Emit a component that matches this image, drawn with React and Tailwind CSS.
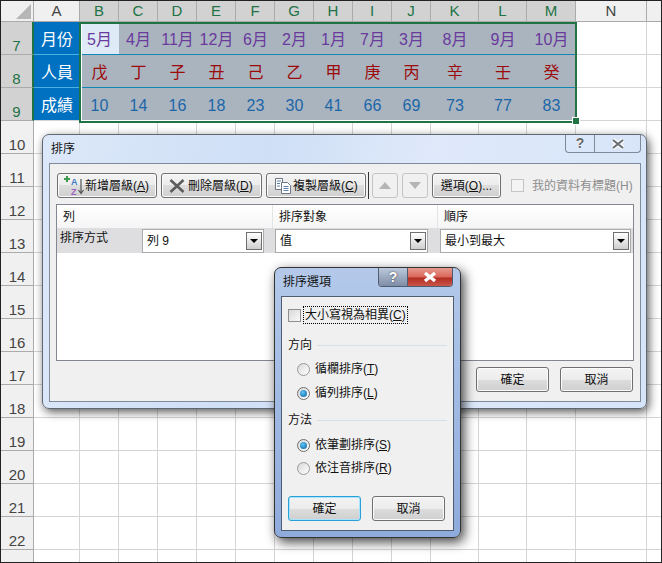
import React from "react";

const FONT = { fontFamily: '"Liberation Sans","Noto Sans CJK TC",sans-serif' };

const columns = ["A", "B", "C", "D", "E", "F", "G", "H", "I", "J", "K", "L", "M", "N", ""];
const months = ["5月", "4月", "11月", "12月", "6月", "2月", "1月", "7月", "3月", "8月", "9月", "10月"];
const people = ["戊", "丁", "子", "丑", "己", "乙", "甲", "庚", "丙", "辛", "壬", "癸"];
const scores = ["10", "14", "16", "18", "23", "30", "41", "66", "69", "73", "77", "83"];
const emptyRows = [10, 11, 12, 13, 14, 15, 16, 17, 18, 19, 20, 21, 22];

function Hot({ children }) {
  return <span className="underline underline-offset-1">{children}</span>;
}

function Button({ children, focused, className = "" }) {
  const edge = focused
    ? "border-[#2b9fd8] shadow-[inset_0_0_0_1px_#a8e4fb]"
    : "border-[#707070] shadow-[inset_0_0_0_1px_#fbfbfb]";
  return (
    <button className={"h-[25px] shrink-0 flex items-center rounded-[3px] border bg-[linear-gradient(#f3f3f3_0%,#ececec_50%,#dddddd_50%,#cfcfcf_100%)] text-[12px] leading-[18px] text-[#111] " + edge + " " + className}>
      {children}
    </button>
  );
}

function Combo({ text, className = "" }) {
  return (
    <div className={"h-[24px] shrink-0 flex items-center justify-between border border-[#ababab] bg-white pl-1 pr-[1px] text-[12px] text-[#111] " + className}>
      <span>{text}</span>
      <span className="w-[16px] h-[18px] flex items-center justify-center border border-[#6f6f6f] bg-[linear-gradient(#ffffff,#cfcfcf)]">
        <span className="w-0 h-0 border-x-[4px] border-x-transparent border-t-[4px] border-t-black"></span>
      </span>
    </div>
  );
}

function Radio({ checked, children }) {
  return (
    <div className="flex items-center gap-[5px] h-[14px] text-[12px] leading-[18px] text-[#111]">
      <span className={"w-[13px] h-[13px] rounded-full border bg-[linear-gradient(135deg,#d8d8d8,#ffffff)] flex items-center justify-center " + (checked ? "border-[#6f6f6f]" : "border-[#9a9a9a]")}>
        {checked && <span className="w-[7px] h-[7px] rounded-full bg-[radial-gradient(circle_at_40%_35%,#5fc4f5,#0a5f9e)]"></span>}
      </span>
      <span>{children}</span>
    </div>
  );
}

function Section({ title }) {
  return (
    <div className="h-[18px] flex items-center gap-[5px] text-[12px] leading-[18px] text-[#111]">
      <span>{title}</span>
      <span className="h-px flex-1 bg-[#d5dfe5]"></span>
    </div>
  );
}

function AddIcon() {
  return (
    <svg width="22" height="22" viewBox="0 0 22 22">
      <path d="M1 4h6M4 1v6" stroke="#3f9a4e" strokeWidth="2" />
      <text x="8" y="10" fontSize="9" fontWeight="700" fill="#3f78c4" fontFamily="Liberation Sans">A</text>
      <text x="8" y="20" fontSize="9" fontWeight="700" fill="#9a5fc0" fontFamily="Liberation Sans">Z</text>
      <path d="M18 4v14M15.5 15l2.5 3.5 2.5-3.5" stroke="#555" strokeWidth="1.2" fill="none" />
    </svg>
  );
}

function DeleteIcon() {
  return (
    <svg width="16" height="16" viewBox="0 0 16 16">
      <path d="M1.5 2l13 12M14.5 2l-13 12" stroke="#5c5c5c" strokeWidth="2.6" />
    </svg>
  );
}

function CopyIcon() {
  return (
    <svg width="18" height="18" viewBox="0 0 18 18">
      <path d="M1.5 1.5h7v11h-7z" fill="#fff" stroke="#6b7785" />
      <path d="M7.5 5.5h6l3 3v8h-9z" fill="#fff" stroke="#6b7785" />
      <path d="M3 4h4M3 6.5h3M3 9h3M9.5 9.5h5M9.5 11.5h5M9.5 13.5h5" stroke="#5c7fa8" />
    </svg>
  );
}

function ArrowButton({ up }) {
  return (
    <div className="w-[26px] h-[25px] shrink-0 flex items-center justify-center rounded-[3px] border border-[#c4c4c4] bg-[#f0f0f0]">
      <span className={"w-0 h-0 border-x-[6px] border-x-transparent " + (up ? "border-b-[7px] border-b-[#b4b4b4]" : "border-t-[7px] border-t-[#b4b4b4]")}></span>
    </div>
  );
}

function Sheet() {
  return (
    <div className="grid grid-cols-[33px_46px_repeat(9,39px)_48px_48px_49px_71px_15px] grid-rows-[21px_repeat(16,33px)_12px] bg-white">
      {/* column headers */}
      <div className="bg-[#f0f0f0] border-r border-b border-[#ababab] flex items-end justify-end pr-[2px] pb-[2px]">
        <svg width="15" height="15" viewBox="0 0 15 15"><path d="M15 0v15H0z" fill="#b6b6b6" /></svg>
      </div>
      {columns.map((c, i) => (
        <div key={i} className={"flex items-center justify-center border-r border-b border-[#ababab] text-[15px] " + (i >= 1 && i <= 12 ? "bg-[#d2d2d2] text-[#217346]" : "bg-[#f0f0f0] text-[#444]")}>
          {c}
        </div>
      ))}

      {/* row 7 */}
      <div className="bg-[#d2d2d2] border-r-2 border-b border-r-[#217346] border-b-[#ababab] flex items-end justify-center text-[15px] leading-[17px] text-[#217346]">7</div>
      <div className="bg-[#0070c0] border-b border-[#4cb0e0] flex items-center justify-center pt-[3px] text-[16px] text-white">月份</div>
      {months.map((m, i) => (
        <div key={i} className={"flex items-center justify-center border-b border-[#1186b5] pt-[3px] text-[16px] text-[#6a3a9c] " + (i === 0 ? "bg-[#deebf7]" : "bg-[#a9b4bf]")}>{m}</div>
      ))}
      <div className="border-r border-b border-[#d4d4d4]"></div>
      <div className="border-b border-[#d4d4d4]"></div>

      {/* row 8 */}
      <div className="bg-[#d2d2d2] border-r-2 border-b border-r-[#217346] border-b-[#ababab] flex items-end justify-center text-[15px] leading-[17px] text-[#217346]">8</div>
      <div className="bg-[#0070c0] border-b border-[#4cb0e0] flex items-center justify-center pt-[3px] text-[16px] text-white">人員</div>
      {people.map((p, i) => (
        <div key={i} className="flex items-center justify-center border-b border-[#1186b5] bg-[#a9b4bf] pt-[3px] text-[16px] text-[#9c0a0a]">{p}</div>
      ))}
      <div className="border-r border-b border-[#d4d4d4]"></div>
      <div className="border-b border-[#d4d4d4]"></div>

      {/* row 9 */}
      <div className="bg-[#d2d2d2] border-r-2 border-b border-r-[#217346] border-b-[#ababab] flex items-end justify-center text-[15px] leading-[17px] text-[#217346]">9</div>
      <div className="bg-[#0070c0] border-b border-[#d4d4d4] flex items-center justify-center pt-[3px] text-[16px] text-white">成績</div>
      {scores.map((s, i) => (
        <div key={i} className="flex items-center justify-center border-b border-[#d4d4d4] bg-[#a9b4bf] pt-[3px] text-[16px] text-[#1c66a8]">{s}</div>
      ))}
      <div className="border-r border-b border-[#d4d4d4]"></div>
      <div className="border-b border-[#d4d4d4]"></div>

      {/* empty rows */}
      {emptyRows.map((r) => (
        <React.Fragment key={r}>
          <div className="bg-[#f0f0f0] border-r border-b border-[#ababab] flex items-end justify-center text-[15px] leading-[17px] text-[#444]">{r}</div>
          {columns.map((c, i) => (
            <div key={i} className="border-r border-b border-[#d4d4d4]"></div>
          ))}
        </React.Fragment>
      ))}
      <div className="bg-[#f0f0f0] border-r border-[#ababab]"></div>
      {columns.map((c, i) => (
        <div key={i} className="border-r border-[#d4d4d4]"></div>
      ))}
    </div>
  );
}

function SortDialog() {
  return (
    <div className="absolute left-[41px] top-[133px] w-[605px] h-[275px] flex flex-col rounded-[7px] border border-[#5f6770] bg-[linear-gradient(100deg,#dce8f9_0%,#cfdff6_35%,#dfe9fa_60%,#d6e4f9_100%)] shadow-[2px_3px_10px_rgba(0,0,0,0.65)] pl-[6px] pr-[5px] pb-[6px]">
      <div className="h-[28px] shrink-0 flex items-center pl-[2px] text-[12px] text-[#111]">排序</div>
      <div className="absolute right-[5px] top-0 w-[76px] h-[18px] flex rounded-b-[4px] border border-t-0 border-[#7d8a99]">
        <div className="w-[29px] border-r border-[#7d8a99] flex items-center justify-center text-[14px] font-bold text-[#666] [text-shadow:0_0_2px_#fff]">?</div>
        <div className="flex-1 flex items-center justify-center">
          <svg width="16" height="12" viewBox="0 0 16 12"><path d="M3 2l10 8M13 2L3 10" stroke="#fff" strokeWidth="4.4" /><path d="M3 2l10 8M13 2L3 10" stroke="#6b6f75" strokeWidth="2.2" /></svg>
        </div>
      </div>
      <div className="flex-1 flex flex-col border border-[#7f8b99] bg-[#f0f0f0] px-[6px] pt-[8px]">
        {/* toolbar */}
        <div className="flex items-center pl-[1px]">
          <Button className="w-[100px] pl-[5px]"><AddIcon /><span>新增層級(<Hot>A</Hot>)</span></Button>
          <Button className="w-[101px] ml-[4px] pl-[7px] gap-[3px]"><DeleteIcon /><span>刪除層級(<Hot>D</Hot>)</span></Button>
          <Button className="w-[100px] ml-[4px] pl-[7px] gap-[1px]"><CopyIcon /><span>複製層級(<Hot>C</Hot>)</span></Button>
          <span className="w-px h-[27px] shrink-0 bg-[#333] ml-[2px]"></span>
          <div className="ml-[3px]"><ArrowButton up /></div>
          <div className="ml-[4px]"><ArrowButton /></div>
          <Button className="w-[69px] ml-[4px] justify-center"><span>選項(<Hot>O</Hot>)...</span></Button>
          <span className="w-[13px] h-[13px] shrink-0 border border-[#c4c4c4] bg-[#f4f4f4] ml-[10px]"></span>
          <span className="ml-[8px] text-[12px] whitespace-nowrap text-[#8d8d8d]">我的資料有標題(H)</span>
        </div>
        {/* level list */}
        <div className="mt-[5px] h-[157px] border border-[#828790] bg-white">
          <div className="h-[23px] grid grid-cols-[216px_165px_1fr] bg-[linear-gradient(#ffffff,#f5f5f5)] text-[12px] text-[#111]">
            <div className="pl-[6px] flex items-center border-r border-[#e4e4e4]">列</div>
            <div className="pl-[6px] flex items-center border-r border-[#e4e4e4]">排序對象</div>
            <div className="pl-[6px] flex items-center">順序</div>
          </div>
          <div className="h-[25px] flex items-center bg-[#dedee0] text-[12px] text-[#111]">
            <span className="w-[85px] shrink-0 pl-[3px] self-start pt-[1px]">排序方式</span>
            <Combo text="列 9" className="w-[122px]" />
            <Combo text="值" className="w-[153px] ml-[11px]" />
            <Combo text="最小到最大" className="w-[191px] ml-[12px]" />
          </div>
        </div>
        {/* footer */}
        <div className="flex justify-end gap-[11px] mt-[6px] pr-[1px]">
          <Button className="w-[73px] justify-center">確定</Button>
          <Button className="w-[73px] justify-center">取消</Button>
        </div>
      </div>
    </div>
  );
}

function OptionsDialog() {
  return (
    <div className="absolute left-[273px] top-[266px] w-[187px] h-[271px] flex flex-col rounded-[7px] border border-[#333] bg-[linear-gradient(#b4c9ea_0%,#a8c0e6_30%,#8fabdc_100%)] shadow-[3px_4px_12px_rgba(0,0,0,0.75)] pl-[6px] pr-[6px] pb-[6px]">
      <div className="h-[28px] shrink-0 flex items-center pl-[2px] text-[12px] text-[#111]">排序選項</div>
      <div className="absolute right-[7px] top-0 w-[75px] h-[19px] flex rounded-b-[4px] border border-t-0 border-[#4f5d70] overflow-hidden">
        <div className="w-[29px] border-r border-[#4f5d70] flex items-center justify-center text-[14px] font-bold text-white [text-shadow:0_0_2px_#333] bg-[linear-gradient(#bcc9dc,#7e8da6)]">?</div>
        <div className="flex-1 flex items-center justify-center bg-[linear-gradient(#e79a8e_0%,#d8675a_50%,#b32d22_55%,#c9564a_100%)]">
          <svg width="16" height="12" viewBox="0 0 16 12"><path d="M3 2l10 8M13 2L3 10" stroke="#fff" strokeWidth="3.4" /></svg>
        </div>
      </div>
      <div className="flex-1 flex flex-col border border-[#4f5d70] bg-[#f0f0f0] px-[6px] pt-[9px]">
        <div className="flex items-center gap-[2px]">
          <span className="w-[13px] h-[13px] shrink-0 border border-[#8f8f8f] bg-[linear-gradient(135deg,#d8d8d8,#fafafa)]"></span>
          <span className="h-[18px] px-[1px] flex items-center border border-dotted border-black text-[12px] text-[#111] whitespace-nowrap">大小寫視為相異(<Hot>C</Hot>)</span>
        </div>
        <div className="mt-[12px]"><Section title="方向" /></div>
        <div className="mt-[8px] ml-[9px] flex flex-col gap-[10px]">
          <Radio>循欄排序(<Hot>T</Hot>)</Radio>
          <Radio checked>循列排序(<Hot>L</Hot>)</Radio>
        </div>
        <div className="mt-[11px]"><Section title="方法" /></div>
        <div className="mt-[9px] ml-[9px] flex flex-col gap-[9px]">
          <Radio checked>依筆劃排序(<Hot>S</Hot>)</Radio>
          <Radio>依注音排序(<Hot>R</Hot>)</Radio>
        </div>
        <div className="flex gap-[11px] mt-[21px]">
          <Button focused className="w-[73px] justify-center">確定</Button>
          <Button className="w-[73px] justify-center">取消</Button>
        </div>
      </div>
    </div>
  );
}

export default function App() {
  return (
    <div style={FONT} className="relative w-[662px] h-[563px] overflow-hidden border border-[#222] bg-white">
      <Sheet />

      {/* selection around B7:M9 */}
      <div className="absolute left-[78px] top-[21px] w-[498px] h-[101px] border-2 border-[#217346] pointer-events-none">
        <div className="w-full h-full border border-t-0 border-r-0 border-white"></div>
      </div>
      <div className="absolute left-[572px] top-[117px] w-[6px] h-[6px] bg-[#217346] outline outline-1 outline-white"></div>

      <SortDialog />
      <OptionsDialog />
    </div>
  );
}
